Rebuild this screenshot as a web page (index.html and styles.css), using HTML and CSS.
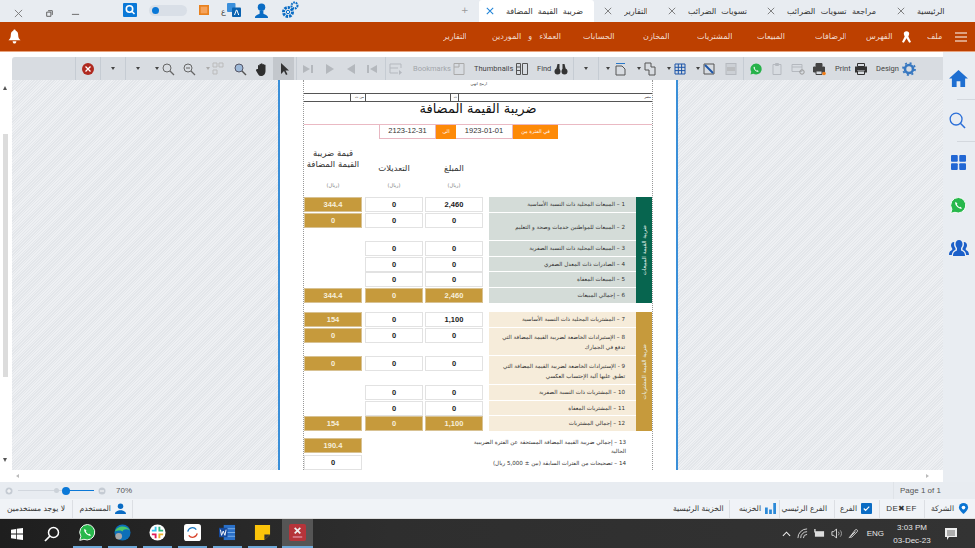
FILE: index.html
```html
<!DOCTYPE html>
<html lang="ar">
<head>
<meta charset="utf-8">
<title>ضريبة القيمة المضافة</title>
<link rel="stylesheet" href="styles.css">
</head>
<body>
<header class="tabs">
  <div class="win">
    <svg class="i-win m-x" viewBox="0 0 10 10"><path d="M1 1l8 8M9 1l-8 8" stroke="#777" fill="none"/></svg>
    <svg class="i-win m-rest" viewBox="0 0 10 10"><path d="M3 1h6v6M1 3h6v6H1z" stroke="#555" fill="none" stroke-width="1.300"/></svg>
    <svg class="i-win m-min" viewBox="0 0 10 10"><path d="M1 6h8" stroke="#777" stroke-width="1.200"/></svg>
    <svg class="i-q m-q" viewBox="0 0 14 14"><rect width="14" height="14" rx="1" fill="#0a78d7"/><circle cx="6.500" cy="6" r="3.200" fill="none" stroke="#fff" stroke-width="1.600"/><path d="M9 8.500l2.500 2.500" stroke="#fff" stroke-width="1.600"/></svg>
    <div class="toggle"><span class="knob"></span></div>
    <svg class="i-q m-sq" viewBox="0 0 12 12"><rect width="10" height="10" x="1" y="1" fill="#f5a35c" stroke="#e8811f" stroke-width="2"/></svg>
    <span class="ain">ع</span>
    <svg class="i-q m-tr" viewBox="0 0 14 14"><rect x="0" y="0" width="8.500" height="9" rx="1" fill="#3b8fdb"/><rect x="5" y="4.500" width="9" height="9.500" rx="1" fill="#0a62b0"/><path d="M7.500 12l1.900-5h.4l1.900 5" stroke="#fff" fill="none"/></svg>
    <svg class="i-user m-user" viewBox="0 0 16 16"><circle cx="8" cy="4.500" r="4" fill="#0a6cc4"/><path d="M1 16c0-3 3-3.500 5-4.500l0-3h4v3c2 1 5 1.500 5 4.500z" fill="#0a6cc4"/></svg>
    <svg class="i-gear m-gear" viewBox="0 0 18 18"><circle cx="7" cy="11" r="4.500" fill="none" stroke="#0a6cc4" stroke-width="3" stroke-dasharray="2.400 1"/><circle cx="7" cy="11" r="1.700" fill="none" stroke="#0a6cc4"/><circle cx="13.500" cy="4.500" r="3" fill="none" stroke="#0a6cc4" stroke-width="2" stroke-dasharray="1.700 .8"/></svg>
    <span class="plus">+</span>
  </div>
  <nav class="tab-list">
    <div class="tab active"><svg class="x blue" viewBox="0 0 10 10"><path d="M1 1l8 8M9 1l-8 8"/></svg><span class="tab-t t-a">ضريبة القيمة المضافة</span></div>
    <div class="tab t2"><svg class="x" viewBox="0 0 10 10"><path d="M1 1l8 8M9 1l-8 8"/></svg><span class="tab-t t-b">التقارير</span></div>
    <div class="tab t3"><svg class="x" viewBox="0 0 10 10"><path d="M1 1l8 8M9 1l-8 8"/></svg><span class="tab-t t-c">تسويات الضرائب</span></div>
    <div class="tab t4"><svg class="x" viewBox="0 0 10 10"><path d="M1 1l8 8M9 1l-8 8"/></svg><span class="tab-t t-d">مراجعة تسويات الضرائب</span></div>
    <div class="tab t5"><svg class="x" viewBox="0 0 10 10"><path d="M1 1l8 8M9 1l-8 8"/></svg><span class="tab-t t-e">الرئيسية</span></div>
  </nav>
</header>

<div class="menu">
  <svg class="bell" viewBox="0 0 14 15"><path d="M7 0c1 0 1.300.8 1.300 1.300C10.500 2 11 4 11 6.500c0 2.500 1 3.500 2.500 5H.5C2 10 3 9 3 6.500 3 4 3.500 2 5.700 1.300 5.700.8 6 0 7 0zM5 12.500h4C9 14 8 15 7 15s-2-1-2-2.500z" fill="#fff"/></svg>
  <nav class="menu-items">
    <span class="mi w-a">التقارير</span>
    <span class="mi w-b">العملاء و الموردين</span>
    <span class="mi w-c">الحسابات</span>
    <span class="mi w-d">المخازن</span>
    <span class="mi w-e">المشتريات</span>
    <span class="mi w-f">المبيعات</span>
    <span class="mi w-g">الرضافات</span>
    <span class="mi w-h">الفهرس</span>
    <svg class="ribbon" viewBox="0 0 10 13"><path d="M5 0a3 3 0 0 1 3 3c0 1-.5 2-1 3l3 6-2 1-3-5-3 5-2-1 3-6C2.500 5 2 4 2 3a3 3 0 0 1 3-3z" fill="#fff"/></svg>
    <span class="mi w-i">ملف</span>
    <svg class="burger" viewBox="0 0 12 10"><path d="M0 1h12M0 5h12M0 9h12" stroke="#fff" stroke-width="1.100"/></svg>
  </nav>
</div>

<main class="main">
  <section class="content">
    <div class="toolbar">
      <span class="sep m63"></span>
      <svg class="ic m5" viewBox="0 0 14 14"><circle cx="7" cy="7" r="6" fill="#b02a20"/><path d="M4.500 4.500l5 5M9.500 4.500l-5 5" stroke="#fff" stroke-width="1.300"/></svg>
      <span class="sep m5"></span>
      <span class="dd"></span>
      <span class="sep"></span>
      <span class="dd"></span>
      <span class="dd m11"></span>
      <svg class="ic m0" viewBox="0 0 14 14"><circle cx="6" cy="6" r="4" fill="none" stroke="#666" stroke-width="1"/><path d="M9 9l4 4" stroke="#666" stroke-width="1.300"/></svg>
      <svg class="ic m7" viewBox="0 0 14 14"><circle cx="6" cy="6" r="4" fill="none" stroke="#666" stroke-width="1"/><path d="M9 9l4 4" stroke="#666" stroke-width="1.300"/><path d="M4 6h4" stroke="#666"/></svg>
      <span class="dd light"></span>
      <svg class="ic-s m0" viewBox="0 0 12 14"><path d="M1 1h4v4H1zM7 1h4v4H7zM1 8h4v4H1z" fill="none" stroke="#bbb"/></svg>
      <svg class="ic m9" viewBox="0 0 14 14"><circle cx="6" cy="6" r="4" fill="#9cb8d8" stroke="#556" stroke-width="1"/><path d="M9 9l4 4" stroke="#555" stroke-width="1.400"/></svg>
      <svg class="ic m8" viewBox="0 0 14 14"><path d="M3 7V3.500a.8.8 0 0 1 1.500 0V2.200a.8.800 0 0 1 1.500 0v-.4a.8.800 0 0 1 1.500 0v.6a.8.800 0 0 1 1.500 0V3a.8.800 0 0 1 1.500 0v6c0 3-2 5-4.500 5S3 12 1 8.500C.6 7.500 2 6.800 3 7z" fill="#2f2f2f"/></svg>
      <div class="pressed m4"><svg class="ic" viewBox="0 0 14 14"><path d="M4 1v11l3-3 2 4 1.500-.8-2-3.700H12z" fill="#333"/></svg></div>
      <span class="sep m2"></span>
      <svg class="ic m4 dim" viewBox="0 0 14 14"><path d="M2 3l7 4-7 4zM10 3h2v8h-2z"/></svg>
      <svg class="ic dim" viewBox="0 0 14 14"><path d="M3 2l8 5-8 5z"/></svg>
      <svg class="ic m7 dim" viewBox="0 0 14 14"><path d="M11 2L3 7l8 5z"/></svg>
      <svg class="ic m7 dim" viewBox="0 0 14 14"><path d="M12 3L5 7l7 4zM2 3h2v8H2z"/></svg>
      <span class="sep m6"></span>
      <svg class="ic m3 dim-l" viewBox="0 0 14 14"><path d="M1 2h11v4M1 2v9h8M1 6h8" fill="none" stroke="#b5b9bf"/><path d="M10 8l3 2.500-3 2.500z" fill="#b5b9bf"/></svg>
      <span class="lbl l-b muted">Bookmarks</span>
      <svg class="ic m3" viewBox="0 0 14 14"><path d="M2 1.500h10v11H2zM2 5h5V1.500" fill="none" stroke="#aaa"/></svg>
      <span class="lbl l-t">Thumbnails</span>
      <svg class="ic m3" viewBox="0 0 14 14"><path d="M1.500 1.500h4v11h-4zM7.500 1.500h5v11h-5zM1.500 5h4M1.500 8.500h4" fill="none" stroke="#555"/></svg>
      <span class="lbl l-f">Find</span>
      <svg class="ic m3" viewBox="0 0 14 14"><circle cx="3.500" cy="9.500" r="3" fill="#333"/><circle cx="10.500" cy="9.500" r="3" fill="#333"/><path d="M2 8l1.500-6h2v6zM12 8l-1.500-6h-2v6z" fill="#333"/></svg>
      <span class="sep m5"></span>
      <span class="dd"></span>
      <span class="sep"></span>
      <span class="dd m5"></span>
      <svg class="ic m1" viewBox="0 0 14 14"><path d="M3 4h6l3 3v6H3z" fill="none" stroke="#555"/><path d="M3 1.500h9" stroke="#2a78c8"/></svg>
      <span class="dd"></span>
      <svg class="ic m0" viewBox="0 0 14 14"><path d="M2 1h6v4h4v8H6V8H2z" fill="none" stroke="#555"/></svg>
      <span class="dd"></span>
      <svg class="ic m0" viewBox="0 0 14 14"><path d="M2 2h10v10H2zM5.300 2v10M8.600 2v10M2 5.300h10M2 8.600h10" fill="none" stroke="#1c55a8"/></svg>
      <span class="dd m7"></span>
      <svg class="ic m0" viewBox="0 0 14 14"><path d="M2 2h10v10H2z" fill="none" stroke="#555"/><path d="M3 3l8 8" stroke="#1c55a8" stroke-width="2"/></svg>
      <svg class="ic dim-l" viewBox="0 0 14 14"><rect x="2" y="1.500" width="10" height="11" fill="#ccd0d5" stroke="#b5b9bf"/><path d="M3 6h8M3 8h8" stroke="#aaa"/></svg>
      <span class="sep m5"></span>
      <svg class="ic m5" viewBox="0 0 14 14"><path d="M7 1.500a5.500 5.500 0 0 0-4.700 8.300L1.500 12.500l2.800-.8A5.500 5.500 0 1 0 7 1.500z" fill="#27b24a"/><path d="M5 4.500c-1 1 0 3 1.200 4s2.800 1.800 3.600.8l-1.300-1-.7.5C7 8.300 6 7.300 5.600 6.500l.6-.6z" fill="#fff"/></svg>
      <svg class="ic m7" viewBox="0 0 14 14"><path d="M3 2.500h8v10H3zM5.500 1.500h3v2h-3z" fill="none" stroke="#b5b9bf"/></svg>
      <svg class="ic m7" viewBox="0 0 14 14"><path d="M1 2.500h10v7H1zM1 5h10" fill="none" stroke="#b5b9bf"/><circle cx="11" cy="10" r="2.200" fill="none" stroke="#999"/></svg>
      <svg class="ic m7" viewBox="0 0 14 14"><path d="M4 1.500h6v3H4zM1.500 5h11v5h-11zM4 9h6v3.500H4z" fill="#444" stroke="#444"/><path d="M4.500 9.500h5v2.500h-5z" fill="#d8dce1"/><circle cx="12" cy="11.500" r="1.800" fill="#ef7d1a"/></svg>
      <span class="lbl l-p m9">Print</span>
      <svg class="ic m3" viewBox="0 0 14 14"><path d="M3.500 1.500h7v3h-7zM3.500 9h7v3.500h-7z" fill="none" stroke="#333"/><path d="M1 4.500h12v6h-2.500V8h-7v2.500H1z" fill="#333"/></svg>
      <span class="lbl l-d">Design</span>
      <svg class="ic m3" viewBox="0 0 14 14"><circle cx="7" cy="7" r="4" fill="none" stroke="#3878c0" stroke-width="2.600"/><circle cx="7" cy="7" r="6" fill="none" stroke="#3878c0" stroke-width="1.800" stroke-dasharray="2 2.700"/></svg>
    </div>
    <div class="viewer">
      <div class="vscroll">
        <span class="arrow up"></span>
        <span class="thumb"></span>
        <span class="arrow down"></span>
      </div>
      <div class="page">
        <div class="frame">
          <div class="top-text"><span>ارمج انهي</span></div>
          <div class="top-row">
            <span class="tr-a"></span><span class="tr-b">من ت</span><span class="tr-c"></span><span class="tr-d">ت</span><span class="tr-e">مصر</span>
          </div>
          <h1 class="title">ضريبة القيمة المضافة</h1>
          <div class="dates">
            <span class="date">2123-12-31</span>
            <span class="tag tag-s">الى</span>
            <span class="date d2">1923-01-01</span>
            <span class="tag tag-l">في الفترة من</span>
          </div>
          <div class="heads">
            <div class="head"><span class="ht two">قيمة ضريبة القيمة المضافة</span><span class="unit">(ريال)</span></div>
            <div class="head"><span class="ht">التعديلات</span><span class="unit">(ريال)</span></div>
            <div class="head"><span class="ht">المبلغ</span><span class="unit">(ريال)</span></div>
          </div>

          <div class="group g-sales">
            <div class="rows">
              <div class="row"><b class="cell gold">344.4</b><b class="cell">0</b><b class="cell">2,460</b><div class="lab">1 – المبيعات المحلية ذات النسبة الأساسية</div></div>
              <div class="row tall"><b class="cell gold">0</b><b class="cell">0</b><b class="cell">0</b><div class="lab">2 – المبيعات للمواطنين خدمات وصحة و التعليم</div></div>
              <div class="row"><i></i><b class="cell">0</b><b class="cell">0</b><div class="lab">3 – المبيعات المحلية ذات النسبة الصفرية</div></div>
              <div class="row"><i></i><b class="cell">0</b><b class="cell">0</b><div class="lab">4 – الصادرات ذات المعدل الصفري</div></div>
              <div class="row"><i></i><b class="cell">0</b><b class="cell">0</b><div class="lab">5 – المبيعات المعفاة</div></div>
              <div class="row"><b class="cell gold">344.4</b><b class="cell gold">0</b><b class="cell gold">2,460</b><div class="lab">6 – إجمالي المبيعات</div></div>
            </div>
            <div class="side"><span>ضريبة القيمة المبيعات</span></div>
          </div>

          <div class="group g-buy">
            <div class="rows">
              <div class="row"><b class="cell gold">154</b><b class="cell">0</b><b class="cell">1,100</b><div class="lab">7 – المشتريات المحلية ذات النسبة الأساسية</div></div>
              <div class="row tall"><b class="cell gold">0</b><b class="cell">0</b><b class="cell">0</b><div class="lab">8 – الإستيرادات الخاضعة لضريبة القيمة المضافة التي تدفع في الجمارك</div></div>
              <div class="row tall t9"><b class="cell gold">0</b><b class="cell">0</b><b class="cell">0</b><div class="lab">9 - الإستيرادات الخاضعة لضريبة القيمة المضافة التي تطبق عليها آلية الإحتساب العكسي</div></div>
              <div class="row"><i></i><b class="cell">0</b><b class="cell">0</b><div class="lab">10 – المشتريات ذات النسبة الصفرية</div></div>
              <div class="row"><i></i><b class="cell">0</b><b class="cell">0</b><div class="lab">11 – المشتريات المعفاة</div></div>
              <div class="row"><b class="cell gold">154</b><b class="cell gold">0</b><b class="cell gold">1,100</b><div class="lab">12 – إجمالي المشتريات</div></div>
            </div>
            <div class="side"><span>ضريبة القيمة المشتريات</span></div>
          </div>

          <div class="totals">
            <div class="total t13"><b class="cell gold">190.4</b><div class="plain">13 – إجمالي ضريبة القيمة المضافة المستحقة عن الفترة الضريبية الحالية</div></div>
            <div class="total t14"><b class="cell">0</b><div class="plain">14 – تصحيحات من الفترات السابقة (بين ± 5,000 ريال)</div></div>
          </div>
        </div>
      </div>
    </div>
    <div class="hscroll"><span class="harrow left"></span><span class="harrow right"></span></div>
  </section>
  <aside class="sidebar">
    <svg class="si s-home" viewBox="0 0 20 18"><path d="M10 0L0 9h3v9h5v-6h4v6h5V9h3z" fill="#1f6fd1"/></svg>
    <span class="si-line"></span>
    <svg class="si s-search" viewBox="0 0 18 18"><circle cx="7.500" cy="7.500" r="6.300" fill="none" stroke="#2b6fd8" stroke-width="1.400"/><path d="M12 12l5 5" stroke="#2b6fd8" stroke-width="1.600"/></svg>
    <span class="si-line"></span>
    <svg class="si s-grid" viewBox="0 0 16 16"><rect width="7.200" height="7.200" rx="1" fill="#2267d4"/><rect x="8.800" width="7.200" height="7.200" rx="1" fill="#2267d4"/><rect y="8.800" width="7.200" height="7.200" rx="1" fill="#2267d4"/><rect x="8.800" y="8.800" width="7.200" height="7.200" rx="1" fill="#2267d4"/></svg>
    <svg class="si s-wa" viewBox="0 0 18 18"><path d="M9 .5a8.200 8.200 0 0 0-7 12.500L.8 17.300l4.400-1.100A8.200 8.200 0 1 0 9 .5z" fill="#28b84c" stroke="#fff"/><path d="M6 5c-1.200 1.200-.2 3.700 1.500 5.400s4 2.700 5.200 1.400l-1.700-1.500-1 .6C9 10.300 7.800 9 7.200 8l.7-.9z" fill="#fff"/></svg>
    <svg class="si s-team" viewBox="0 0 20 16"><path d="M10 0c2.200 0 3.500 1.700 3.500 4 0 1.800-.8 3.200-1.500 4v2.500c1.500.8 4 1.300 4 5.500H4c0-4.200 2.500-4.700 4-5.500V8c-.7-.8-1.500-2.200-1.500-4 0-2.300 1.300-4 3.500-4z" fill="#1b5fc9"/><path d="M5 2c-1.800 0-3 1.400-3 3.300 0 1.300.6 2.400 1.200 3v1.700C2 10.700 0 11.300 0 15h2.800c.3-3 1.800-4.400 3.700-5.300V8.300C5.600 7.200 5 5.700 5 4.100c0-.7.100-1.400.3-2.100zM15 2c1.800 0 3 1.400 3 3.300 0 1.300-.6 2.400-1.200 3v1.700c1.200.7 3.200 1.300 3.200 5h-2.800c-.3-3-1.800-4.400-3.700-5.300V8.300C14.400 7.200 15 5.700 15 4.100c0-.7-.1-1.400-.3-2.100z" fill="#1b5fc9"/></svg>
  </aside>
</main>

<div class="zoombar">
  <svg class="zb" viewBox="0 0 8 8"><circle cx="4" cy="4" r="3.500" fill="#c5cbd3"/><path d="M2 4h4M4 2v4" stroke="#fff"/></svg>
  <div class="slider"><span class="s-done"></span><span class="s-tick"></span><span class="s-knob"></span></div>
  <svg class="zb" viewBox="0 0 8 8"><circle cx="4" cy="4" r="3.500" fill="#c5cbd3"/><path d="M2 4h4" stroke="#fff"/></svg>
  <span class="pct">70%</span>
  <span class="pageno">Page 1 of 1</span>
</div>

<footer class="status">
  <div class="st-left">
    <span class="st-t st-nouser">لا يوجد مستخدمين</span>
    <span class="st-item it-user"><span class="st-t">المستخدم</span><svg class="sti" viewBox="0 0 12 12"><circle cx="6" cy="3.500" r="3" fill="#0a6cc4"/><path d="M0 12c0-3 3-3 4.500-4h3C9 9 12 9 12 12z" fill="#0a6cc4"/></svg></span>
  </div>
  <div class="st-right">
    <span class="st-t st-mainstore">الخزينة الرئيسية</span>
    <span class="st-item it-store"><span class="st-t">الخزينه</span><svg class="sti" viewBox="0 0 12 12"><path d="M0 5h3v7H0zM4.500 7h3v5h-3zM9 0h3v12H9z" fill="#2c8ad8"/></svg></span>
    <span class="st-item it-branchn"><span class="st-t">الفرع الرئيسي</span></span>
    <span class="st-item it-branch"><span class="st-t">الفرع</span><svg class="sti" viewBox="0 0 12 12"><rect width="12" height="12" rx="1" fill="#0a6cc4"/><path d="M3 6l2 2 4-4" stroke="#fff" fill="none" stroke-width="1.300"/></svg></span>
    <span class="st-item it-dexef"><span class="st-t st-en">DE✖EF</span></span>
    <span class="st-item it-comp"><span class="st-t">الشركة</span><svg class="sti" viewBox="0 0 12 12"><path d="M6 0a5 5 0 0 0-5 5c0 3 5 7 5 7s5-4 5-7a5 5 0 0 0-5-5z" fill="#0a74d2"/><circle cx="6" cy="5" r="2" fill="#fff"/></svg></span>
  </div>
</footer>

<div class="taskbar">
  <div class="apps">
    <svg class="win-logo" viewBox="0 0 13 13"><path d="M0 1.800l5.500-.8v5H0zM6.300.9L13 0v6H6.300zM0 7h5.500v5L0 11.200zM6.300 7H13v6l-6.700-.9z" fill="#fff"/></svg>
    <svg class="tb-search" viewBox="0 0 16 16"><circle cx="9.500" cy="6.500" r="5" fill="none" stroke="#fff" stroke-width="1.500"/><path d="M6 10l-5 5" stroke="#fff" stroke-width="1.700"/></svg>
    <div class="app"><svg class="ai" viewBox="0 0 18 18"><path d="M9 .5a8.200 8.200 0 0 0-7 12.500L.8 17.300l4.400-1.100A8.200 8.200 0 1 0 9 .5z" fill="#28b84c" stroke="#fff"/><path d="M6 5c-1.200 1.200-.2 3.700 1.500 5.400s4 2.700 5.200 1.400l-1.700-1.500-1 .6C9 10.300 7.800 9 7.200 8l.7-.9z" fill="#fff"/></svg></div>
    <div class="app"><svg class="ai" viewBox="0 0 18 18"><circle cx="9" cy="9" r="8.500" fill="#0d6fb8"/><path d="M1 8C3 2 13 0 17 7c-3-2-7-2-8 1-1-1-4-2-8 0z" fill="#4ac968"/><circle cx="5" cy="13" r="3.500" fill="#a8a8a8"/></svg></div>
    <div class="app"><svg class="ai" viewBox="0 0 18 18"><circle cx="9" cy="9" r="8.500" fill="#fff"/><path d="M7 3v5M3 7h3" stroke="#36c5f0" stroke-width="2"/><path d="M11 3v5M15 7h-3" stroke="#2eb67d" stroke-width="2"/><path d="M7 15v-5M3 11h3" stroke="#e01e5a" stroke-width="2"/><path d="M11 15v-5M15 11h-3" stroke="#ecb22e" stroke-width="2"/></svg></div>
    <div class="app"><svg class="ai" viewBox="0 0 18 18"><rect width="18" height="18" rx="3" fill="#fff"/><path d="M4 8a5 5 0 0 1 9-2" stroke="#1a78c2" fill="none" stroke-width="1.300"/><path d="M14 10a5 5 0 0 1-9 2" stroke="#d8432b" fill="none" stroke-width="1.300"/></svg></div>
    <div class="app"><svg class="ai" viewBox="0 0 18 18"><rect x="5" y="1" width="12" height="16" fill="#2a70c8"/><path d="M5 5h12M5 9h12M5 13h12" stroke="#7eb0e8"/><rect x="0" y="4" width="9" height="10" fill="#15499c"/><path d="M1.500 6l1.200 6 1.800-4.500 1.800 4.500 1.200-6" stroke="#fff" fill="none"/></svg></div>
    <div class="app"><svg class="ai" viewBox="0 0 18 18"><path d="M1 1h16v10l-6 6H1z" fill="#fbc40a"/><path d="M17 11h-6v6z" fill="#333"/></svg></div>
    <div class="app current"><svg class="ai" viewBox="0 0 18 18"><rect width="18" height="18" rx="2" fill="#b5343a"/><path d="M6 4l6 6M12 4l-6 6" stroke="#eee" stroke-width="1.800"/><rect x="4" y="13" width="10" height="1.500" fill="#d89"/></svg></div>
  </div>
  <div class="tray">
    <svg class="tr chev" viewBox="0 0 10 6"><path d="M1 5l4-4 4 4" stroke="#eee" fill="none" stroke-width="1.200"/></svg>
    <svg class="tr" viewBox="0 0 12 12"><path d="M1 11a10 10 0 0 1 10-10M4 11a7 7 0 0 1 7-7M7 11a4 4 0 0 1 4-4" stroke="#ddd" fill="none"/></svg>
    <svg class="tr" viewBox="0 0 12 12"><rect x="1" y="3.500" width="10" height="6" fill="#ddd"/><path d="M1 1v4" stroke="#ddd" stroke-width="1.500"/></svg>
    <svg class="tr" viewBox="0 0 12 12"><path d="M1 4h2l3-3v10L3 8H1z" fill="none" stroke="#ddd"/><path d="M8 4a3 3 0 0 1 0 4M10 2.500a5 5 0 0 1 0 7" stroke="#aaa" fill="none"/></svg>
    <svg class="tr" viewBox="0 0 12 12"><path d="M1 11L8 2c2-1 3 1 2 2L4 10c-1 1-2 0-1-1l5-5" stroke="#ddd" fill="none"/></svg>
    <span class="eng">ENG</span>
    <div class="clock"><span>3:03 PM</span><span>03-Dec-23</span></div>
    <svg class="notif" viewBox="0 0 12 12"><path d="M0 0h12v9H4l-2 3V9H0z" fill="#eee"/><path d="M2 3h8M2 5h8M2 7h8" stroke="#333" stroke-width=".7"/></svg>
  </div>
</div>
</body>
</html>
```

FILE: styles.css
```css
* { box-sizing: border-box; }
html, body { margin: 0; padding: 0; }
body {
  width: 975px; height: 548px; overflow: hidden;
  display: flex; flex-direction: column;
  font-family: "DejaVu Sans", "Noto Sans", sans-serif;
  background: #fff; color: #333;
}
svg { display: block; flex: none; }

/* tab strip */
.tabs { height: 22px; background: #e8ecf1; display: flex; justify-content: space-between; flex: none; }
.win { display: flex; align-items: center; padding-left: 14px; width: 479px; height: 22px; flex: none; }
.i-win { width: 9px; height: 9px; }
.m-x { margin-top: 4px; }
.m-rest { margin: 4px 0 0 23px; width: 7px; height: 7px; }
.m-min { margin: 4px 0 0 18px; }
.i-q { width: 14px; height: 14px; }
.m-q { margin: -2px 0 0 43px; }
.toggle { width: 38px; height: 11px; border-radius: 6px; background: #d9dfe7; margin: -1px 0 0 12px; padding: 2px 0 0 3px; }
.knob { display: block; width: 7px; height: 7px; border-radius: 50%; background: #0a78d7; }
.m-sq { width: 10px; height: 10px; margin: -2px 0 0 12px; }
.ain { font-size: 8px; color: #444; margin: 0 0 0 12px; width: 6px; }
.m-tr { margin: -2px 0 0 0; }
.i-user { width: 15px; height: 15px; margin: -2px 0 0 13px; }
.i-gear { width: 18px; height: 18px; margin: -3px 0 0 12px; }
.plus { font-size: 9px; color: #999; margin: -3px 0 0 162px; }
.tab-list { display: flex; flex: 1; height: 22px; }
.tab { display: flex; align-items: center; height: 22px; flex: none; }
.tab.active { width: 115px; background: #fff; border-radius: 3px 3px 0 0; padding-left: 7px; }
.x { width: 8px; height: 8px; stroke: #666; fill: none; }
.x.blue { stroke: #1f84d8; stroke-width: 1.300; }
.tab-t { display: block; margin-left: 12px; font-size: 8px; color: #333; white-space: normal; text-align: justify; text-align-last: justify; height: 11px; line-height: 11px; overflow: hidden; }
.t-a { width: 77px; }
.t2 { margin-left: 10px; }
.t-b { width: 23px; }
.t3 { margin-left: 21px; }
.t-c { width: 59px; }
.t4 { margin-left: 20px; }
.t-d { width: 89px; }
.t5 { margin-left: 21px; }
.t-e { width: 30px; }

/* orange menu */
.menu { height: 30px; flex: none; background: #bd4000; border-bottom: 1px solid #e8a27c; display: flex; align-items: center; padding-left: 8px; color: #f3ddd0; }
.bell { width: 13px; height: 15px; }
.menu-items { display: flex; align-items: center; margin-left: 422px; }
.mi { display: block; font-size: 8px; text-align: justify; text-align-last: justify; height: 12px; line-height: 12px; overflow: hidden; flex: none; }
.w-a { width: 23px; }
.w-b { width: 69px; margin-left: 26px; }
.w-c { width: 32px; margin-left: 22px; }
.w-d { width: 26px; margin-left: 28px; }
.w-e { width: 35px; margin-left: 28px; }
.w-f { width: 30px; margin-left: 25px; }
.w-g { width: 31px; margin-left: 28px; }
.w-h { width: 29px; margin-left: 20px; }
.ribbon { width: 9px; height: 12px; margin-left: 7px; }
.w-i { width: 17px; margin-left: 16px; }
.burger { width: 12px; height: 10px; margin-left: 11px; }

/* main */
.main { flex: 1; min-height: 0; display: flex; }
.content { width: 943px; display: flex; flex-direction: column; flex: none; }
.toolbar { margin: 5px 0 0 12px; height: 23px; flex: none; background: #d8dce1; border-radius: 3px 0 0 0; display: flex; align-items: center; }
.toolbar > * { flex: none; margin-left: 8px; }
.toolbar .m0 { margin-left: 0; }
.toolbar .m1 { margin-left: 1px; }
.toolbar .m2 { margin-left: 2px; }
.toolbar .m3 { margin-left: 3px; }
.toolbar .m4 { margin-left: 4px; }
.toolbar .m5 { margin-left: 5px; }
.toolbar .m6 { margin-left: 6px; }
.toolbar .m7 { margin-left: 7px; }
.toolbar .m9 { margin-left: 9px; }
.toolbar .m11 { margin-left: 11px; }
.toolbar .m63 { margin-left: 63px; }
.sep { width: 1px; height: 23px; background: #c6ccd3; }
.ic { width: 14px; height: 14px; }
.ic-s { width: 12px; height: 14px; }
.dim { fill: #b4b8bd; }
.dd { width: 8px; height: 14px; display: flex; align-items: center; justify-content: center; }
.dd::after { content: ""; border-left: 2.500px solid transparent; border-right: 2.500px solid transparent; border-top: 3px solid #444; }
.dd.light::after { border-top-color: #aaa; }
.pressed { width: 21px; height: 23px; background: #c3c7cc; display: flex; align-items: center; justify-content: center; }
.lbl { font-family: "Roboto", "Liberation Sans", sans-serif; font-size: 7.500px; white-space: nowrap; color: #444; }
.muted { color: #a2a6ab; }
.toolbar .l-b { width: 36px; margin-left: 10px; }
.l-t { width: 38px; }
.l-f { width: 14px; }
.l-p { width: 16px; }
.l-d { width: 23px; }

/* viewer */
.viewer {
  height: 390px; flex: none; display: flex; overflow: hidden;
  background: repeating-linear-gradient(135deg, #e3e6ea 0 1px, #eef0f3 1px 2px);
}
.vscroll { width: 12px; flex: none; background: #fff; display: flex; flex-direction: column; align-items: flex-start; height: 390px; padding: 6px 0 0 3px; }
.thumb { display: block; width: 5px; height: 243px; background: #dcdcdc; margin-top: 44px; }
.arrow { display: block; border-left: 2.500px solid transparent; border-right: 2.500px solid transparent; }
.arrow.up { border-bottom: 4px solid #555; }
.arrow.down { border-top: 4px solid #555; margin-top: 81px; }
.page {
  width: 400px; height: 390px; flex: none; margin-left: 266px;
  background: #fff; border-left: 2px solid #3a8fd8; border-right: 2px solid #3a8fd8;
  padding-left: 23px; overflow: hidden;
}
.frame { width: 350px; height: 420px; border-left: 1px dotted #999; border-right: 1px dotted #999; }

.top-text { height: 13px; text-align: right; font-size: 4px; line-height: 7px; padding-right: 165px; color: #444; }
.top-row { display: flex; height: 9px; border-top: 1px solid #555; border-bottom: 1px solid #555; font-size: 3.500px; line-height: 7px; color: #333; }
.top-row span { display: block; border-left: 1px solid #555; text-align: right; padding-right: 1px; flex: none; }
.top-row .tr-a { width: 46px; border-left: 0; }
.tr-b { width: 15px; }
.tr-c { width: 85px; }
.tr-d { width: 8px; }
.tr-e { width: 194px; }
.title { margin: 0; height: 23px; text-align: center; font-size: 13px; font-weight: 400; line-height: 13px; color: #111; border-bottom: 1px solid #eab9c3; }
.dates { display: flex; height: 14px; margin-left: 75px; }
.date { width: 57px; border: 1px solid #e8b7c2; border-top: 0; font: 7.500px/12px "Liberation Sans", sans-serif; text-align: center; color: #333; }
.d2 { width: 57px; border-left: 0; }
.tag { background: #fd8a08; color: #fff; font-size: 5px; line-height: 13px; text-align: center; }
.tag-s { width: 20px; }
.tag-l { width: 45px; }
.heads { display: grid; grid-template-columns: 61px 60px 58px; height: 58px; }
.head { width: 58px; display: flex; flex-direction: column; align-items: center; justify-content: flex-end; padding-bottom: 8px; text-align: center; }
.ht { font-size: 8.500px; line-height: 11px; color: #333; white-space: nowrap; }
.ht.two { line-height: 11px; width: 58px; white-space: normal; }
.unit { font-size: 5px; color: #777; line-height: 8px; margin-top: 7px; }
.ht.two + .unit { margin-top: 11px; }

.group { display: flex; }
.g-sales { height: 107px; }
.g-buy { height: 120px; margin-top: 8px; }
.rows { width: 332px; flex: none; }
.row { display: grid; grid-template-columns: 61px 60px 64px 147px; height: 15.700px; }
.row.tall { height: 28.300px; }
.row.t9 { height: 29px; }
.cell { display: block; width: 58px; height: 15px; border: 1px solid #e2e2e2; background: #fff; font: 700 7.500px/13px "Liberation Sans", sans-serif; text-align: center; color: #222; }
.cell.gold { background: #c69a3c; color: #f6efdc; border-color: #d8c293; }
.lab { direction: rtl; font-size: 5.600px; line-height: 12px; text-align: right; padding: 1px 11px 0 3px; margin-bottom: 1px; color: #333; }
.tall .lab { padding-top: 2px; line-height: 10px; display: flex; align-items: center; }
.g-sales .lab { background: #d4dcd8; }
.g-buy .lab { background: #f6ecda; }
.side { width: 16px; flex: none; display: flex; align-items: center; justify-content: center; color: #eaf3ee; font-size: 5.500px; }
.side span { writing-mode: vertical-rl; transform: rotate(180deg); white-space: nowrap; }
.g-sales .side { background: #07654f; height: 106px; }
.g-buy .side { background: #c69a3c; height: 119px; }
.totals { margin-top: 6px; }
.total { display: grid; grid-template-columns: 155px 167px; }
.t13 { height: 17px; }
.t14 { height: 17px; }
.plain { direction: rtl; font-size: 5.600px; line-height: 9px; text-align: right; color: #333; padding-top: 0; }
.t14 .plain { padding-top: 4px; }

.hscroll { height: 12px; flex: none; background: #fff; display: flex; align-items: center; justify-content: space-between; padding: 0 14px 0 16px; }
.harrow { display: block; border-top: 2.500px solid transparent; border-bottom: 2.500px solid transparent; }
.harrow.left { border-right: 3px solid #bbb; }
.harrow.right { border-left: 3px solid #bbb; }

.sidebar { width: 32px; flex: none; background: #e9edf2; display: flex; flex-direction: column; align-items: flex-start; }
.si { margin-left: 6px; }
.s-home { width: 19px; height: 17px; margin-top: 18px; }
.si-line { display: block; width: 18px; height: 1px; background: #d4d8de; margin-left: 14px; }
.s-home + .si-line { margin-top: 12px; }
.s-search { width: 17px; height: 17px; margin-top: 12px; }
.s-search + .si-line { margin-top: 12px; }
.s-grid { width: 15px; height: 15px; margin: 13px 0 0 8px; }
.s-wa { width: 17px; height: 17px; margin: 27px 0 0 7px; }
.s-team { width: 20px; height: 16px; margin: 26px 0 0 6px; }

/* zoom */
.zoombar { height: 17px; flex: none; background: #e8ecf1; display: flex; align-items: center; padding-left: 5px; font-family: "Liberation Sans", sans-serif; font-size: 8px; color: #555; }
.zb { width: 8px; height: 8px; }
.slider { width: 76px; height: 1.500px; background: #d2d7de; margin: 0 4px 0 5px; position: relative; }
.s-done { position: absolute; left: 48px; right: 0; top: 0; height: 1.500px; background: #0a78d7; }
.s-tick { position: absolute; left: 36px; top: -2px; width: 5px; height: 5px; border-radius: 50%; background: #ccd2d9; }
.s-knob { position: absolute; left: 44px; top: -3px; width: 8px; height: 8px; border-radius: 50%; background: #0a78d7; }
.pct { margin-left: 10px; }
.pageno { margin-left: 761px; border-left: 1px solid #dfe3e8; height: 17px; line-height: 17px; padding-left: 6px; }

/* status */
.status { height: 20px; flex: none; background: #f0f3f7; border-bottom: 1px solid #ddd; display: flex; justify-content: space-between; align-items: stretch; }
.st-left, .st-right, .st-item { display: flex; align-items: center; }
.st-t { font-size: 7.600px; color: #333; white-space: nowrap; }
.st-en { font-family: "Liberation Sans", sans-serif; font-size: 8px; letter-spacing: .5px; }
.st-item { gap: 4px; justify-content: flex-end; border-left: 1px solid #dcdfe4; height: 18px; }
.st-left .st-item { border-right: 1px solid #dcdfe4; padding-right: 6px; }
.sti { width: 11px; height: 11px; }
.st-nouser { width: 72px; text-align: center; }
.it-user { width: 61px; }
.st-mainstore { width: 56px; text-align: right; padding-right: 6px; }
.it-store { width: 50px; padding-right: 3px; }
.it-branchn { width: 55px; padding-right: 7px; }
.it-branch { width: 45px; padding-right: 7px; }
.it-dexef { width: 45px; padding-right: 7px; }
.it-comp { width: 51px; padding-right: 6px; }

/* taskbar */
.taskbar { height: 29px; flex: none; background: linear-gradient(90deg, #1e1e1e, #2e2e2e 40%, #333); display: flex; justify-content: space-between; align-items: center; }
.apps { display: flex; align-items: center; height: 29px; padding-left: 11px; }
.win-logo { width: 12px; height: 12px; }
.tb-search { width: 16px; height: 16px; margin: 0 13px 0 21px; }
.app { width: 29px; height: 29px; margin-left: 6px; border-bottom: 2px solid #6fa9d8; display: flex; align-items: center; justify-content: center; }
.apps .app:first-of-type { margin-left: 0; }
.app.current { background: #555; width: 31px; margin-left: 5px; }
.ai { width: 17px; height: 17px; }
.tray { display: flex; align-items: center; color: #e6e6e6; padding-right: 18px; }
.tr { width: 11px; height: 11px; margin-left: 6px; }
.chev { width: 9px; height: 6px; margin-left: 0; }
.eng { font: 8px "Liberation Sans", sans-serif; margin-left: 8px; }
.clock { display: flex; flex-direction: column; align-items: center; font: 8px/13px "Liberation Sans", sans-serif; margin-left: 8px; width: 40px; }
.notif { width: 12px; height: 12px; margin-left: 13px; }
```
